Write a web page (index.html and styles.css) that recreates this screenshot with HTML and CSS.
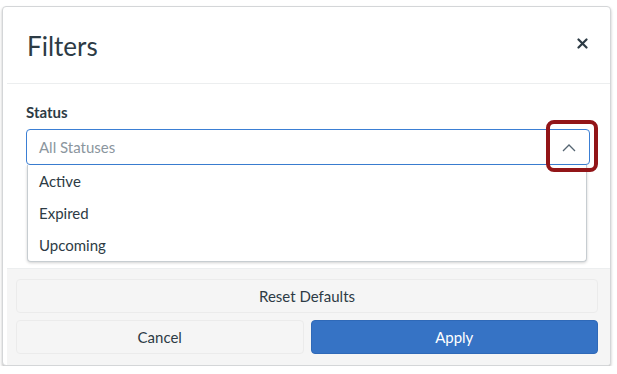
FILE: index.html
```html
<!DOCTYPE html>
<html lang="en">
<head>
    <meta charset="UTF-8">
    <title>Filters</title>
    <link rel="stylesheet" href="styles.css">
</head>
<body>
    <div class="modal">
        <div class="modal-header">
            <h1>Filters</h1>
            <button class="close-btn" aria-label="Close">
                <svg width="11" height="11" viewBox="0 0 11 11"><path d="M1.5 1.5l8 8M9.5 1.5l-8 8" stroke="#2d3b45" stroke-width="2.2" stroke-linecap="round"/></svg>
            </button>
        </div>

        <div class="modal-body">
            <label class="field-label">Status</label>
            <div class="select">
                <div class="select-input">
                    <span class="placeholder">All Statuses</span>
                    <svg class="chevron" width="14" height="8" viewBox="0 0 14 8"><path d="M1 7l6-6 6 6" fill="none" stroke="#556572" stroke-width="1.3"/></svg>
                </div>
                <div class="highlight"></div>
                <ul class="options">
                    <li>Active</li>
                    <li>Expired</li>
                    <li>Upcoming</li>
                </ul>
            </div>
        </div>

        <div class="modal-footer">
            <button class="btn btn-light btn-wide">Reset Defaults</button>
            <div class="btn-row">
                <button class="btn btn-light">Cancel</button>
                <button class="btn btn-primary">Apply</button>
            </div>
        </div>
    </div>
</body>
</html>
```

FILE: styles.css
```css
body {
    margin: 0;
    background-color: #fff;
    font-family: 'Lato', 'Liberation Sans', sans-serif;
    color: #2d3b45;
}

.modal {
    margin: 6px 6px 0 2px;
    height: 360px;
    border: 1px solid #d4d6d8;
    border-radius: 4px;
    box-shadow: 0 2px 3px rgba(0, 0, 0, 0.25);
    background-color: #fff;
    display: flex;
    flex-direction: column;
    overflow: hidden;
    box-sizing: border-box;
    padding-left: 4px;
}

.modal-header {
    height: 76px;
    display: flex;
    align-items: center;
    justify-content: space-between;
    padding: 0 22px 0 20px;
    border-bottom: 1px solid #eceeef;
    flex-shrink: 0;
}

.modal-header h1 {
    margin: 0;
    font-size: 26px;
    font-weight: 400;
    padding-top: 1px;
}

.close-btn {
    background: none;
    border: none;
    padding: 0;
    margin-bottom: 4px;
    display: flex;
}

.modal-body {
    flex: 1;
    padding: 19px 20px 0 19px;
}

.field-label {
    display: block;
    font-size: 15px;
    font-weight: 700;
    margin-bottom: 8px;
}

.select {
    position: relative;
}

.select-input {
    height: 36px;
    border: 1px solid #3b7fd4;
    border-radius: 4px;
    display: flex;
    align-items: center;
    justify-content: space-between;
    padding: 0 13px 0 12px;
    box-sizing: border-box;
}

.placeholder {
    font-size: 15px;
    color: #8b969e;
}

.chevron {
    margin-top: 1px;
}

.highlight {
    position: absolute;
    top: -9px;
    right: -8px;
    width: 52px;
    height: 52px;
    border: 4px solid #921518;
    border-radius: 8px;
    box-sizing: border-box;
    z-index: 2;
}

.options {
    position: absolute;
    top: 36px;
    left: 1px;
    right: 3px;
    margin: 0;
    padding: 0;
    list-style: none;
    background-color: #fff;
    border: 1px solid #c7cdd1;
    border-top: none;
    border-radius: 0 0 4px 4px;
    box-shadow: 0 1px 3px rgba(0, 0, 0, 0.18);
}

.options li {
    height: 32px;
    line-height: 32px;
    padding-left: 11px;
    font-size: 15px;
}

.modal-footer {
    background-color: #f5f5f5;
    border-top: 1px solid #eceeef;
    height: 97px;
    padding: 10px 12px 0 9px;
    box-sizing: border-box;
    display: flex;
    flex-direction: column;
    gap: 7px;
    flex-shrink: 0;
}

.btn {
    height: 34px;
    border-radius: 4px;
    font-family: 'Lato', 'Liberation Sans', sans-serif;
    font-size: 15px;
    color: #2d3b45;
    cursor: pointer;
}

.btn-light {
    background-color: #f5f5f5;
    border: 1px solid #ebebeb;
}

.btn-wide {
    width: 100%;
}

.btn-row {
    display: flex;
    gap: 7px;
}

.btn-row .btn {
    flex: 1;
}

.btn-primary {
    background-color: #3673c5;
    border: 1px solid #2f69b8;
    color: #fff;
}
```
